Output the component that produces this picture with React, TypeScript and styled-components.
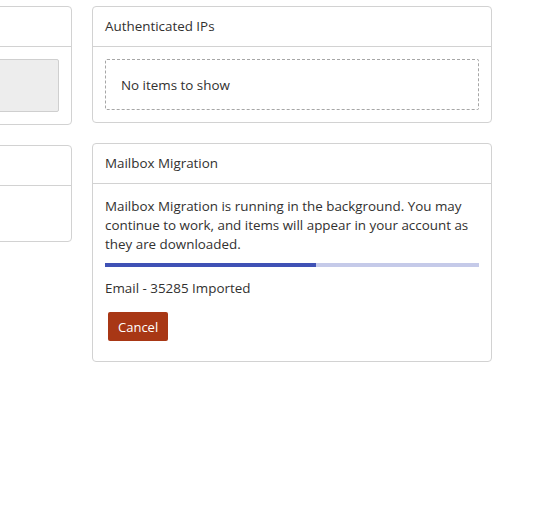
import React from "react";
import styled, { createGlobalStyle } from "styled-components";

const Global = createGlobalStyle`
  html, body { margin: 0; padding: 0; background: #ffffff; overflow: hidden; }
  body {
    font-family: "Segoe UI", "Open Sans", "Noto Sans", sans-serif;
    font-size: 13.4px;
    color: #323130;
  }
`;

const Page = styled.div`
  display: grid;
  grid-template-columns: 400px 400px;
  column-gap: 20px;
  align-items: start;
  padding-top: 6px;
  margin-left: -328px;
`;

const Column = styled.div`
  display: flex;
  flex-direction: column;
  gap: 20px;
`;

const Card = styled.section`
  border: 1px solid #d2d2d2;
  border-radius: 4px;
  background: #fff;
  overflow: hidden;
`;

const CardHeader = styled.header`
  height: 19px;
  padding: 10px 12px;
  line-height: 19px;
  border-bottom: 1px solid #d2d2d2;
  color: #323130;
`;

const CardBody = styled.div<{ $minHeight?: number }>`
  padding: 12px;
  min-height: ${(p) => (p.$minHeight ? `${p.$minHeight}px` : "auto")};
  box-sizing: border-box;
`;

const GrayBox = styled.div`
  height: 51px;
  background: #ededed;
  border: 1px solid #cfcfcf;
  border-radius: 2px;
`;

const EmptyBox = styled.div`
  border: 1px dashed #a6a6a6;
  border-radius: 2px;
  padding: 16px 15px 14px;
  line-height: 19px;
`;

const Paragraph = styled.p`
  margin: 0;
  padding-top: 1px;
  line-height: 19px;
`;

const Progress = styled.div`
  height: 4px;
  margin: 9px 0 12px;
  background: #c5cae9;
`;

const ProgressFill = styled.div`
  height: 100%;
  background: #3f51b5;
`;

const Status = styled.p`
  margin: 0 0 11px;
  line-height: 19px;
`;

const Button = styled.button`
  margin: 3px 3px 8px 3px;
  height: 29px;
  padding: 0 10px;
  border: none;
  border-radius: 2px;
  background: #a83715;
  color: #fff;
  font-family: inherit;
  font-size: 13px;
  cursor: pointer;
`;

export default function App() {
  const progress = 211 / 374;
  return (
    <>
      <Global />
      <Page>
        <Column>
          <Card>
            <CardHeader />
            <CardBody>
              <GrayBox />
            </CardBody>
          </Card>
          <Card>
            <CardHeader />
            <CardBody $minHeight={55} />
          </Card>
        </Column>
        <Column>
          <Card>
            <CardHeader>Authenticated IPs</CardHeader>
            <CardBody>
              <EmptyBox>No items to show</EmptyBox>
            </CardBody>
          </Card>
          <Card>
            <CardHeader>Mailbox Migration</CardHeader>
            <CardBody>
              <Paragraph>
                Mailbox Migration is running in the background. You may continue to work, and items
                will appear in your account as they are downloaded.
              </Paragraph>
              <Progress>
                <ProgressFill style={{ width: `${progress * 100}%` }} />
              </Progress>
              <Status>Email - 35285 Imported</Status>
              <Button>Cancel</Button>
            </CardBody>
          </Card>
        </Column>
      </Page>
    </>
  );
}
